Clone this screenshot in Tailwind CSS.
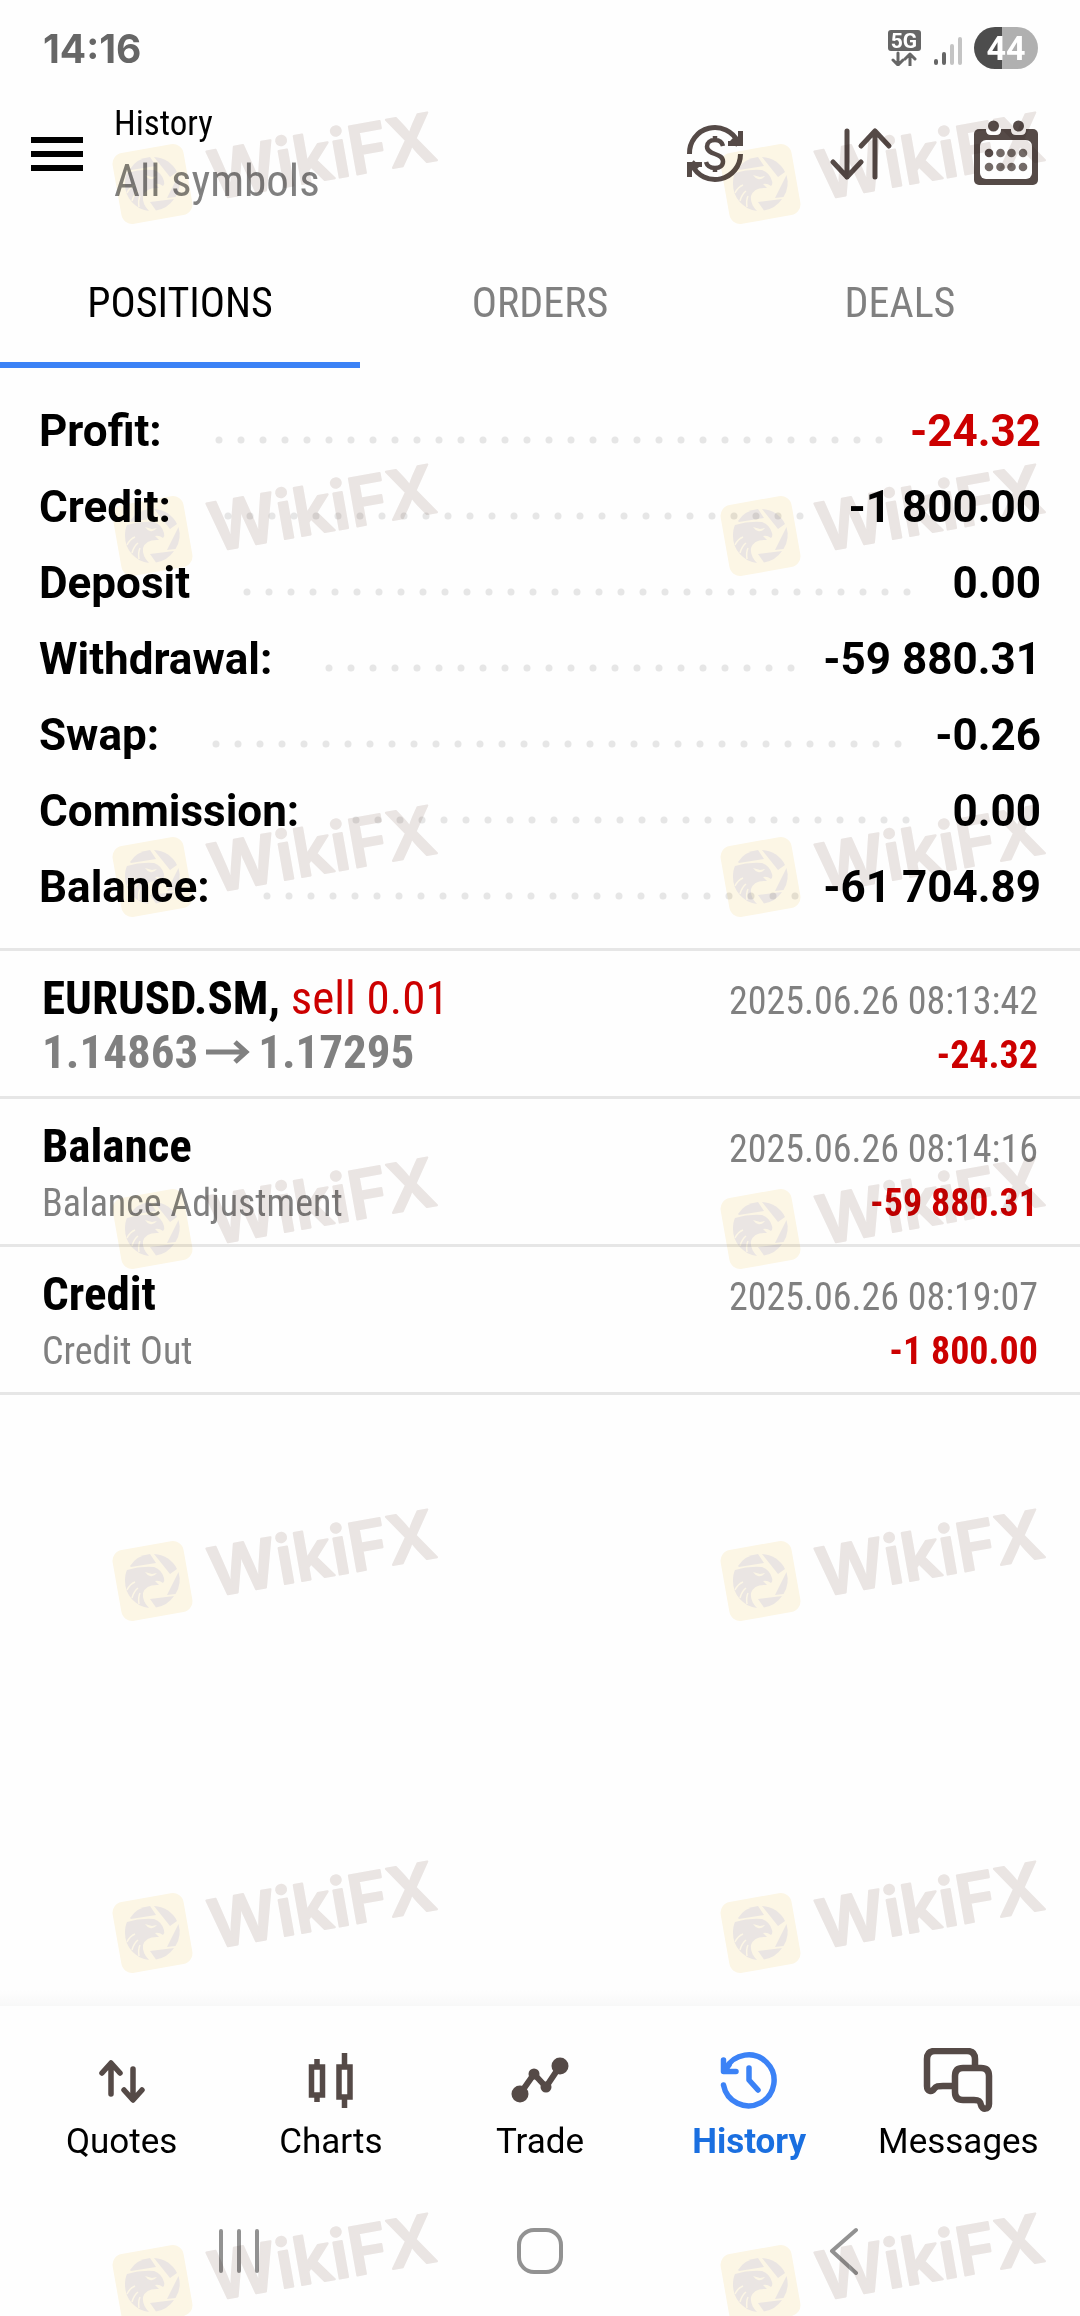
<!DOCTYPE html>
<html lang="en">

<head>
    <meta charset="UTF-8">
    <meta name="viewport" content="width=device-width, initial-scale=1.0">
    <title>History</title>
    <script src="https://cdn.jsdelivr.net/npm/@tailwindcss/browser@4"></script>
</head>

<body class="bg-[#fefefe]">
    <div class="relative flex flex-col min-h-screen overflow-hidden font-['Roboto_Condensed','Roboto',sans-serif] text-black">

        <!-- Status bar -->
        <div class="h-24 pl-[43px] pr-[42px] flex items-center justify-between">
            <span class="font-['Inter',sans-serif] font-bold text-[39px] leading-none text-[#666666]">14:16</span>
            <div class="flex items-center">
                <svg class="w-[34px] h-9" viewBox="0 0 34 36" fill="none" stroke="#666666" stroke-width="3" stroke-linecap="round" stroke-linejoin="round">
                    <rect x="0" y="0" width="33" height="21" rx="3" fill="#666666" stroke="none" />
                    <text x="16" y="18" text-anchor="middle" font-family="Roboto" font-weight="700" font-size="21" fill="#fff" stroke="none">5G</text>
                    <path d="M10 23V35M5 30l5 5l5-5M22 36V24M17 29l5-5l5 5" />
                </svg>
                <svg class="w-7 h-9 ml-3" viewBox="0 0 28 36" fill="none" stroke-width="4" stroke-linecap="round">
                    <path d="M2 31v2M10 24v9" stroke="#666666" />
                    <path d="M18 16v17M26 9v24" stroke="#c4c4c4" />
                </svg>
                <div class="ml-3 w-16 h-[42px] rounded-full bg-linear-to-r from-[#4d4d4d] from-44% to-[#b0b0b0] to-44% flex items-center justify-center font-['Roboto',sans-serif] font-bold text-[34px] leading-none text-white">44</div>
            </div>
        </div>

        <!-- Header -->
        <header class="h-[116px] pl-[31px] pr-[42px] flex items-center">
            <button aria-label="Menu">
                <svg class="w-[52px] h-[34px]" viewBox="0 0 52 34"><path d="M0 0h52v6H0zM0 14h52v6H0zM0 28h52v6H0z" /></svg>
            </button>
            <div class="ml-[31px] flex-1">
                <h1 class="text-[35px] leading-[54px]">History</h1>
                <p class="text-[45px] leading-[60px] text-[#808080]">All symbols</p>
            </div>
            <div class="flex gap-20">
                <button aria-label="Currency">
                    <svg class="w-16 h-16" viewBox="0 0 64 64" fill="none" stroke="#554a47" stroke-width="5">
                        <path d="M3.500 32A25.500 25.500 0 0 1 52 20" />
                        <path d="M54.500 32A25.500 25.500 0 0 1 6 43" />
                        <path d="M42 21.500H54.500V9M46 17l6 6" />
                        <path d="M16 42.500H3.500V55M6 40l6 6" />
                        <path d="M37 24c-1-4-4-6-8-6c-5 0-8 3-8 6.500c0 9 16 6 16 15c0 4-3 6.500-8 6.500c-5 0-8-2.500-9-6M29 14v5M29 45v5" stroke-width="4.500" />
                    </svg>
                </button>
                <button aria-label="Sort">
                    <svg class="w-16 h-16" viewBox="0 0 64 64" fill="none" stroke="#554a47" stroke-width="5" stroke-linecap="round" stroke-linejoin="round">
                        <path d="M17 9v46M3 40l14 15l14-15" />
                        <path d="M45 55V9M31 24L45 9l14 15" />
                    </svg>
                </button>
                <button aria-label="Calendar">
                    <svg class="w-16 h-16 overflow-visible" viewBox="0 0 64 64" fill="#554a47">
                        <rect x="0" y="7" width="64" height="56" rx="5" />
                        <rect x="6" y="18" width="52" height="39" rx="6" fill="#fefefe" />
                        <path d="M12 2h15v6q0 5-5 5h-5q-5 0-5-5zM37 2h15v6q0 5-5 5h-5q-5 0-5-5z" fill="#fefefe" />
                        <circle cx="19.500" cy="4" r="5.500" />
                        <circle cx="44.500" cy="4" r="5.500" />
                        <circle cx="15" cy="31" r="4.300" />
                        <g fill="#736a67">
                            <circle cx="26.500" cy="31" r="4.300" />
                            <circle cx="37.500" cy="31" r="4.300" />
                            <circle cx="49" cy="31" r="4.300" />
                            <circle cx="15" cy="45" r="4.300" />
                            <circle cx="26.500" cy="45" r="4.300" />
                            <circle cx="37.500" cy="45" r="4.300" />
                            <circle cx="49" cy="45" r="4.300" />
                        </g>
                    </svg>
                </button>
            </div>
        </header>

        <!-- Tabs -->
        <div role="tablist" class="grid grid-cols-3 text-[42px] leading-[50px] text-[#808080]">
            <button role="tab" aria-selected="true" class="h-[156px] pt-8 border-b-6 border-[#3b82f6] text-black">POSITIONS</button>
            <button role="tab" class="h-[156px] pt-8 border-b-6 border-transparent">ORDERS</button>
            <button role="tab" class="h-[156px] pt-8 border-b-6 border-transparent">DEALS</button>
        </div>

        <!-- Summary -->
        <dl class="px-[39px] pt-[25px] pb-[23px] font-['Roboto',sans-serif] font-bold text-[44px] leading-[76px]">
            <div class="flex items-center">
                <dt>Profit:</dt>
                <svg class="flex-1 min-w-0 h-5 ml-[57px] mr-7 overflow-visible"><line x1="0" y1="19" x2="100%" y2="19" stroke="#e6e6e6" stroke-width="7" stroke-linecap="round" stroke-dasharray="0 22" /></svg>
                <dd class="text-[#cc0000]">-24.32</dd>
            </div>
            <div class="flex items-center">
                <dt>Credit:</dt>
                <svg class="flex-1 min-w-0 h-5 ml-[57px] mr-7 overflow-visible"><line x1="0" y1="19" x2="100%" y2="19" stroke="#e6e6e6" stroke-width="7" stroke-linecap="round" stroke-dasharray="0 22" /></svg>
                <dd>-1 800.00</dd>
            </div>
            <div class="flex items-center">
                <dt>Deposit</dt>
                <svg class="flex-1 min-w-0 h-5 ml-[57px] mr-7 overflow-visible"><line x1="0" y1="19" x2="100%" y2="19" stroke="#e6e6e6" stroke-width="7" stroke-linecap="round" stroke-dasharray="0 22" /></svg>
                <dd>0.00</dd>
            </div>
            <div class="flex items-center">
                <dt>Withdrawal:</dt>
                <svg class="flex-1 min-w-0 h-5 ml-[57px] mr-7 overflow-visible"><line x1="0" y1="19" x2="100%" y2="19" stroke="#e6e6e6" stroke-width="7" stroke-linecap="round" stroke-dasharray="0 22" /></svg>
                <dd>-59 880.31</dd>
            </div>
            <div class="flex items-center">
                <dt>Swap:</dt>
                <svg class="flex-1 min-w-0 h-5 ml-[57px] mr-7 overflow-visible"><line x1="0" y1="19" x2="100%" y2="19" stroke="#e6e6e6" stroke-width="7" stroke-linecap="round" stroke-dasharray="0 22" /></svg>
                <dd>-0.26</dd>
            </div>
            <div class="flex items-center">
                <dt>Commission:</dt>
                <svg class="flex-1 min-w-0 h-5 ml-[57px] mr-7 overflow-visible"><line x1="0" y1="19" x2="100%" y2="19" stroke="#e6e6e6" stroke-width="7" stroke-linecap="round" stroke-dasharray="0 22" /></svg>
                <dd>0.00</dd>
            </div>
            <div class="flex items-center">
                <dt>Balance:</dt>
                <svg class="flex-1 min-w-0 h-5 ml-[57px] mr-7 overflow-visible"><line x1="0" y1="19" x2="100%" y2="19" stroke="#e6e6e6" stroke-width="7" stroke-linecap="round" stroke-dasharray="0 22" /></svg>
                <dd>-61 704.89</dd>
            </div>
        </dl>

        <!-- History list -->
        <ul class="flex-1">
            <li class="h-37 pt-5 px-[42px] border-t-3 border-[#e6e6e6] flex justify-between">
                <div class="text-[47px] leading-[54px]">
                    <p><b>EURUSD.SM,</b> <span class="text-[#cc0000]">sell 0.01</span></p>
                    <p class="font-bold text-[#808080] flex items-center">1.14863
                        <svg class="w-11 h-6 mx-2" viewBox="0 0 44 24" fill="none" stroke="#808080" stroke-width="5"><path d="M0 12h41M29 2l11 10l-11 10" /></svg>
                        1.17295</p>
                </div>
                <div class="pt-[3px] text-[38px] leading-[54px] text-right">
                    <p class="text-[#808080]">2025.06.26 08:13:42</p>
                    <p class="font-bold text-[#cc0000]">-24.32</p>
                </div>
            </li>
            <li class="h-37 pt-5 px-[42px] border-t-3 border-[#e6e6e6] flex justify-between">
                <div>
                    <p class="text-[47px] leading-[54px] font-bold">Balance</p>
                    <p class="text-[38px] leading-[60px] text-[#808080]">Balance Adjustment</p>
                </div>
                <div class="pt-[3px] text-[38px] leading-[54px] text-right">
                    <p class="text-[#808080]">2025.06.26 08:14:16</p>
                    <p class="font-bold text-[#cc0000]">-59 880.31</p>
                </div>
            </li>
            <li class="h-[151px] pt-5 px-[42px] border-y-3 border-[#e6e6e6] flex justify-between">
                <div>
                    <p class="text-[47px] leading-[54px] font-bold">Credit</p>
                    <p class="text-[38px] leading-[60px] text-[#808080]">Credit Out</p>
                </div>
                <div class="pt-[3px] text-[38px] leading-[54px] text-right">
                    <p class="text-[#808080]">2025.06.26 08:19:07</p>
                    <p class="font-bold text-[#cc0000]">-1 800.00</p>
                </div>
            </li>
        </ul>

        <!-- Bottom navigation -->
        <div class="h-4 bg-linear-to-b from-transparent to-[#f8f8f8]"></div>
        <nav class="h-45 pt-[42px] px-[17px] grid grid-cols-5 font-['Roboto',sans-serif] text-[35px] leading-[40px]">
            <a href="#" class="flex flex-col items-center gap-2.5">
                <svg class="w-20 h-16" viewBox="0 0 80 64" fill="none" stroke="#554a47" stroke-width="5.500" stroke-linecap="round" stroke-linejoin="round">
                    <path d="M29 46V16M20 25l9-10l9 10" />
                    <path d="M51 21v30M42 42l9 10l9-10" />
                </svg>
                Quotes
            </a>
            <a href="#" class="flex flex-col items-center gap-2.5">
                <svg class="w-20 h-16" viewBox="0 0 80 64" fill="none" stroke="#554a47" stroke-width="5.500">
                    <path d="M20.500 19h11v28h-11zM26 11v8M26 47v7" />
                    <path d="M48 19h11v30h-11zM53.500 5v14M53.500 49v11" />
                </svg>
                Charts
            </a>
            <a href="#" class="flex flex-col items-center gap-2.5">
                <svg class="w-20 h-16" viewBox="0 0 80 64" fill="#554a47">
                    <path d="M20 46L34 26L46 39L60 18" fill="none" stroke="#554a47" stroke-width="6" />
                    <circle cx="20" cy="46" r="8.500" />
                    <circle cx="34" cy="26" r="5.500" />
                    <circle cx="46" cy="39" r="5.500" />
                    <circle cx="60" cy="18" r="8.500" />
                </svg>
                Trade
            </a>
            <a href="#" aria-current="page" class="flex flex-col items-center gap-2.5 font-bold text-[#1a6fe0]">
                <svg class="w-20 h-16" viewBox="0 0 80 64" fill="none" stroke="#3b82f6" stroke-width="5.500" stroke-linecap="round" stroke-linejoin="round">
                    <path d="M14.500 37A25.500 25.500 0 1 0 17 20.500" />
                    <path d="M14.500 12v11.500H27M15 23l5-6M40 20v12l9 10" />
                </svg>
                History
            </a>
            <a href="#" class="flex flex-col items-center gap-2.5">
                <svg class="w-20 h-16" viewBox="0 0 80 64" fill="none" stroke="#554a47" stroke-width="6.500" stroke-linejoin="round">
                    <path d="M57 19V11q0-8-8-8H17q-8 0-8 8V38c0 6 5 6 7 3c2-3 4-3 9-3H37" />
                    <path d="M45 20H63q8 0 8 8V56c0 6-7 6-8 1c-1-4-2-5-7-5H45q-8 0-8-8V28q0-8 8-8z" />
                </svg>
                Messages
            </a>
        </nav>

        <!-- System navigation -->
        <div class="h-[130px] px-[88px] grid grid-cols-3 items-center justify-items-center">
            <button aria-label="Recents">
                <svg class="w-12 h-12" viewBox="0 0 48 48" stroke="#929292" stroke-width="4" stroke-linecap="round"><path d="M6 4v40M24 4v40M42 4v40" /></svg>
            </button>
            <button aria-label="Home">
                <svg class="w-12 h-12" viewBox="0 0 48 48" fill="none" stroke="#929292" stroke-width="4"><rect x="3" y="3" width="42" height="42" rx="15" /></svg>
            </button>
            <button aria-label="Back">
                <svg class="w-12 h-12" viewBox="0 0 48 48" fill="none" stroke="#929292" stroke-width="4" stroke-linecap="round" stroke-linejoin="round"><path d="M39 3L15 24L39 46" /></svg>
            </button>
        </div>

        <!-- Watermark -->
        <svg class="hidden">
            <symbol id="mark" viewBox="0 0 360 150" overflow="visible">
                <g transform="translate(52.500 91) rotate(-10)">
                    <rect x="-36" y="-36" width="72" height="72" rx="11" fill="#fdf7e6" />
                    <text x="57" y="26" font-family="Inter" font-weight="600" font-size="67" fill="#ebe6e4" stroke="#ebe6e4" stroke-width="2" stroke-linejoin="round">WikiFX</text>
                </g>
                <g transform="translate(52 91)" fill="#ebe6e4">
                    <!-- shutter blades -->
                    <path d="M-21 -14L4 -18L-2 -27A27 27 0 0 0 -22 -15Z" />
                    <path d="M2 -27L18 -7L25 -12A27 27 0 0 0 2 -27Z" />
                    <path d="M26.500 -9L15 14L23.500 13A27 27 0 0 0 26.500 -9Z" />
                    <path d="M-2 18L22 15A27 27 0 0 1 4 26.500Z" />
                    <!-- eagle -->
                    <path d="M-25 -11Q-12 -15 2 -14Q10 -11 12 -3Q13 0 11 2Q7 -1 3 0L7 4Q-6 3 -9 12Q-10 20 -3 27A27 27 0 0 1 -27 0Q-27 -7 -25 -11Z" />
                    <path d="M-7 -9L0 -7L5 -8Q2 -4 -2 -5Q-5 -6 -7 -9Z" fill="#fdf7e6" />
                    <path d="M-25 9Q-22 3 -17 1M-20 17Q-18 10 -14 7M-13 23Q-14 16 -12 12" fill="none" stroke="#fdf7e6" stroke-width="1.500" />
                </g>
            </symbol>
        </svg>
        <div aria-hidden="true" class="absolute inset-0 pt-[93px] overflow-hidden pointer-events-none mix-blend-multiply">
            <div class="h-[352px] pl-[100px] flex gap-[248px]"><svg class="shrink-0 w-[360px] h-[150px]"><use href="#mark" /></svg><svg class="shrink-0 w-[360px] h-[150px]"><use href="#mark" /></svg></div>
            <div class="h-[341px] pl-[100px] flex gap-[248px]"><svg class="shrink-0 w-[360px] h-[150px]"><use href="#mark" /></svg><svg class="shrink-0 w-[360px] h-[150px]"><use href="#mark" /></svg></div>
            <div class="h-[352px] pl-[100px] flex gap-[248px]"><svg class="shrink-0 w-[360px] h-[150px]"><use href="#mark" /></svg><svg class="shrink-0 w-[360px] h-[150px]"><use href="#mark" /></svg></div>
            <div class="h-[352px] pl-[100px] flex gap-[248px]"><svg class="shrink-0 w-[360px] h-[150px]"><use href="#mark" /></svg><svg class="shrink-0 w-[360px] h-[150px]"><use href="#mark" /></svg></div>
            <div class="h-[352px] pl-[100px] flex gap-[248px]"><svg class="shrink-0 w-[360px] h-[150px]"><use href="#mark" /></svg><svg class="shrink-0 w-[360px] h-[150px]"><use href="#mark" /></svg></div>
            <div class="h-[352px] pl-[100px] flex gap-[248px]"><svg class="shrink-0 w-[360px] h-[150px]"><use href="#mark" /></svg><svg class="shrink-0 w-[360px] h-[150px]"><use href="#mark" /></svg></div>
            <div class="h-[352px] pl-[100px] flex gap-[248px]"><svg class="shrink-0 w-[360px] h-[150px]"><use href="#mark" /></svg><svg class="shrink-0 w-[360px] h-[150px]"><use href="#mark" /></svg></div>
        </div>
    </div>
</body>

</html>
